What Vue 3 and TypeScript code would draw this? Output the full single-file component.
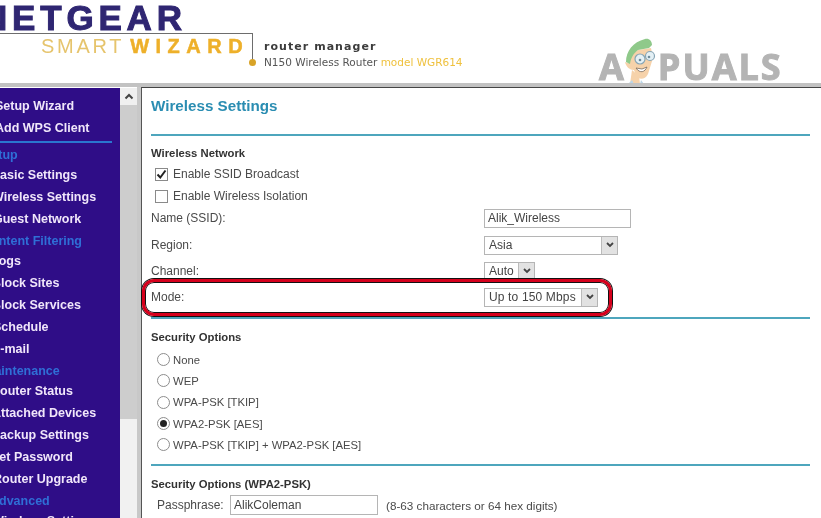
<script setup lang="ts">
interface NavItem { label: string; head?: boolean; x: number }
const nav: NavItem[] = [
  { label: 'Setup', head: true, x: -17 },
  { label: 'Basic Settings', x: -9 },
  { label: 'Wireless Settings', x: -8 },
  { label: 'Guest Network', x: -7 },
  { label: 'Content Filtering', head: true, x: -18 },
  { label: 'Logs', x: -9 },
  { label: 'Block Sites', x: -8 },
  { label: 'Block Services', x: -8 },
  { label: 'Schedule', x: -7 },
  { label: 'E-mail', x: -8 },
  { label: 'Maintenance', head: true, x: -16 },
  { label: 'Router Status', x: -9 },
  { label: 'Attached Devices', x: -8 },
  { label: 'Backup Settings', x: -9 },
  { label: 'Set Password', x: -9 },
  { label: 'Router Upgrade', x: -7 },
  { label: 'Advanced', head: true, x: -10 },
  { label: 'Wireless Settings', x: -8 },
]
const radios = [
  { label: 'None', on: false },
  { label: 'WEP', on: false },
  { label: 'WPA-PSK [TKIP]', on: false },
  { label: 'WPA2-PSK [AES]', on: true },
  { label: 'WPA-PSK [TKIP] + WPA2-PSK [AES]', on: false },
]
</script>

<template>
  <div class="page">
    <header class="head">
      <div class="brand">
        <div class="netgear">NETGEAR</div>
        <div class="bracket">
          <span class="smart">SMART</span><span class="wizard">WIZARD</span>
          <i class="dot"></i>
        </div>
      </div>
      <div class="product">
        <div class="rm">router manager</div>
        <div class="model">N150 Wireless Router <span class="gold">model WGR614</span></div>
      </div>
      <div class="appuals">
        <span class="al">A</span>
        <svg class="face" viewBox="0 0 44 52" width="44" height="52">
          <path d="M14 36 L12 50 L22 50 L21 42Z" fill="#f6d2aa" />
          <path d="M10 50 L14 46 L16 50Z M22 50 L23 46 L26 50Z" fill="#bcd6e8" />
          <path d="M10 29 C12 23 15 19 20 16 L33 14 L35 24 L30 40 C27 46 21 46 18 42 L16 36 C12 36 8 33 7 28 Z" fill="#f6d2aa" />
          <path d="M8 28 C8 17 15 8 27 5 C31 4 34 7 34 11 L31 14 L20 16 C15 20 13 24 12 30Z" fill="#8fc98a" />
          <circle cx="22" cy="25" r="5" fill="#e4f0f5" stroke="#87a5b5" stroke-width="1.2" />
          <circle cx="32" cy="22" r="4.5" fill="#e4f0f5" stroke="#87a5b5" stroke-width="1.2" />
          <circle cx="22" cy="26" r="1.3" fill="#6e8a99" />
          <circle cx="31" cy="23" r="1.3" fill="#6e8a99" />
          <path d="M18 34 C22 40 27 38 29 33 L24 35Z" fill="#fff" stroke="#7a6a5c" stroke-width=".8" />
        </svg>
        <span class="al rest">PUALS</span>
      </div>
    </header>

    <div class="body">
      <nav class="side">
        <div class="top-link a">Setup Wizard</div>
        <div class="top-link b">Add WPS Client</div>
        <div class="rule"></div>
        <div
          v-for="(n, i) in nav"
          :key="i"
          class="item"
          :class="{ sec: n.head }"
          :style="{ marginLeft: n.x + 'px' }"
        >{{ n.label }}</div>
      </nav>

      <div class="scroll">
        <div class="btn">
          <svg width="10" height="7" viewBox="0 0 10 7"><path d="M1.5 5.5 L5 2 L8.5 5.5" fill="none" stroke="#444" stroke-width="2" /></svg>
        </div>
        <div class="thumb"></div>
      </div>

      <main class="main">
        <h1>Wireless Settings</h1>
        <hr class="line first" />
        <h2 class="sec-w">Wireless Network</h2>
        <label class="chk"><span class="box"><svg width="11" height="11" viewBox="0 0 11 11"><path d="M1.5 5.5 L4.3 8.5 L9.5 1.5" fill="none" stroke="#222" stroke-width="2" /></svg></span>Enable SSID Broadcast</label>
        <label class="chk"><span class="box"></span>Enable Wireless Isolation</label>

        <div class="form">
          <div class="row r1"><span>Name (SSID):</span><div class="input wide">Alik_Wireless</div></div>
          <div class="row r2"><span>Region:</span>
            <div class="select s-region"><span class="val">Asia</span><span class="arrow"><svg width="8" height="6" viewBox="0 0 8 6"><path d="M1 1 L4 4 L7 1" fill="none" stroke="#444" stroke-width="1.8" /></svg></span></div>
          </div>
          <div class="row r3"><span>Channel:</span>
            <div class="select s-auto"><span class="val">Auto</span><span class="arrow"><svg width="8" height="6" viewBox="0 0 8 6"><path d="M1 1 L4 4 L7 1" fill="none" stroke="#444" stroke-width="1.8" /></svg></span></div>
          </div>
          <div class="row r4"><span>Mode:</span>
            <div class="select s-mode"><span class="val">Up to 150 Mbps</span><span class="arrow"><svg width="8" height="6" viewBox="0 0 8 6"><path d="M1 1 L4 4 L7 1" fill="none" stroke="#444" stroke-width="1.8" /></svg></span></div>
            <div class="mark"></div>
          </div>
        </div>

        <hr class="line second" />
        <h2 class="sec-h">Security Options</h2>
        <div class="radios">
          <label v-for="r in radios" :key="r.label" class="radio"><span class="ring" :class="{ on: r.on }"></span>{{ r.label }}</label>
        </div>
        <hr class="line third" />
        <h2 class="sec-p">Security Options (WPA2-PSK)</h2>
        <div class="pass">
          <span class="pl">Passphrase:</span>
          <div class="input pi">AlikColeman</div>
          <span class="hint">(8-63 characters or 64 hex digits)</span>
        </div>
      </main>
    </div>
  </div>
</template>

<style scoped>
.page {
  width: 821px;
  height: 518px;
  overflow: hidden;
  background: #fff;
  font-family: "Liberation Sans", Arial, sans-serif;
  color: #444;
  display: flex;
  flex-direction: column;
  filter: blur(0.35px);
}
.head {
  height: 83px;
  flex: none;
  position: relative;
  display: flex;
  background: #fff;
  overflow: hidden;
}
.brand { width: 253px; flex: none; }
.netgear {
  height: 33px;
  margin-left: -18px;
  font-weight: 700;
  font-size: 35px;
  line-height: 35px;
  letter-spacing: 4.8px;
  color: #2f2672;
  -webkit-text-stroke: 1px #2f2672;
  white-space: nowrap;
}
.bracket {
  position: relative;
  height: 30px;
  box-sizing: border-box;
  border-top: 1px solid #6d6d6d;
  border-right: 1px solid #6d6d6d;
  padding: 1px 0 0 41px;
  font-size: 20px;
  line-height: 23px;
  white-space: nowrap;
}
.smart { color: #e6c46c; letter-spacing: 2.7px; margin-right: 6px; }
.wizard { color: #eeb02a; font-weight: 700; letter-spacing: 6.5px; -webkit-text-stroke: .5px #eeb02a; }
.dot {
  position: absolute;
  right: -4px;
  bottom: -3px;
  width: 7px;
  height: 7px;
  border-radius: 50%;
  background: #d8a328;
}
.product { margin: 40px 0 0 11px; }
.rm {
  font-family: "DejaVu Sans", sans-serif;
  font-weight: 700;
  font-size: 11px;
  line-height: 14px;
  letter-spacing: 1.05px;
  color: #3c3c3c;
}
.model {
  font-family: "DejaVu Sans", sans-serif;
  font-size: 10.5px;
  line-height: 16px;
  color: #555;
  white-space: nowrap;
}
.gold { color: #efc13e; }
.appuals {
  position: absolute;
  left: 599px;
  top: 34px;
  display: flex;
  height: 52px;
  font-family: "Open Sans", sans-serif;
  font-weight: 700;
  font-size: 36px;
  line-height: 52px;
  letter-spacing: 2px;
  color: #b4b4b4;
}
.al {
  -webkit-text-stroke: 1px #b4b4b4;
  margin-top: 7px;
  white-space: nowrap;
}
.rest { padding-right: 4px; }
.face { flex: none; margin: 0 -4px 0 -8px; }
.body {
  flex: 1;
  display: flex;
  min-height: 0;
  border-top: 4px solid #c2c2c2;
}
.side {
  width: 120px;
  flex: none;
  margin-top: 1px;
  background: #2f0d87;
  color: #f0e6fa;
  font-weight: 700;
  font-size: 12.5px;
  white-space: nowrap;
  overflow: hidden;
  padding-top: 7px;
}
.top-link { height: 22px; line-height: 22px; }
.a { margin-left: -5px; }
.b { margin-left: -5px; }
.rule { height: 2px; width: 112px; margin: 2px 0 1px; background: #2a76cf; }
.item { height: 22px; line-height: 22px; }
.item.sec { color: #2f6fd6; height: 20px; }
.scroll {
  width: 17px;
  flex: none;
  margin-top: 1px;
  background: #f1f1f1;
  display: flex;
  flex-direction: column;
}
.btn {
  height: 17px;
  background: #f0f0f0;
  display: flex;
  align-items: center;
  justify-content: center;
}
.thumb { height: 314px; background: #cdcdcd; }
.main {
  flex: 1;
  min-width: 0;
  margin-left: 4px;
  box-sizing: border-box;
  border-left: 1px solid #555;
  border-top: 1px solid #444;
  padding: 0 11px 0 9px;
  box-shadow: -4px 0 0 #c8c8c8;
  font-size: 12px;
  color: #4a4a4a;
}
h1 {
  margin: 9px 0 0;
  font-size: 15.2px;
  line-height: 18px;
  color: #2a8db2;
  font-weight: 700;
}
h2 {
  margin: 0;
  font-size: 11.3px;
  font-weight: 700;
  line-height: 14px;
  color: #333;
}
.line { border: 0; height: 2px; margin: 0; background: #4ea6bd; }
.first { margin: 19px 0 10px; }
.sec-w { margin-bottom: 3px; }
.second { margin-top: 7px; }
.third { margin-top: 9px; }
.sec-h { margin-top: 11px; }
.sec-p { margin-top: 11px; }
.chk {
  display: flex;
  align-items: center;
  height: 22px;
  padding-left: 4px;
  white-space: nowrap;
}
.box {
  width: 11px;
  height: 11px;
  border: 1px solid #8a8a8a;
  margin-right: 5px;
  display: flex;
  align-items: center;
  justify-content: center;
}
.row { display: grid; grid-template-columns: 333px auto; align-items: center; position: relative; }
.r1 { height: 22px; }
.r2 { height: 26px; margin-top: 3px; }
.r3 { height: 26px; }
.r4 { height: 26px; }
.input {
  box-sizing: border-box;
  border: 1px solid #b5b5b5;
  background: #fff;
  color: #444;
  padding-left: 3px;
  font-size: 12px;
}
.wide { width: 147px; height: 19px; line-height: 17px; }
.select {
  box-sizing: border-box;
  border: 1px solid #b5b5b5;
  background: #fff;
  display: flex;
  align-items: stretch;
  justify-content: space-between;
  height: 19px;
  line-height: 17px;
  padding-left: 4px;
}
.s-region { width: 134px; }
.s-auto { width: 51px; }
.s-mode { width: 114px; letter-spacing: .15px; }
.val { color: #444; white-space: nowrap; }
.arrow {
  width: 15px;
  background: #e2e2e2;
  border-left: 1px solid #bbb;
  display: flex;
  align-items: center;
  justify-content: center;
}
.mark {
  position: absolute;
  left: -9px;
  right: 198px;
  top: -5px;
  height: 37px;
  box-sizing: border-box;
  border: 3px solid #d6001c;
  border-radius: 12px;
  box-shadow: 0 0 0 1px #111, inset 0 0 0 1px #111;
  pointer-events: none;
}
.radios { padding: 5px 0 0 6px; }
.radio {
  display: flex;
  align-items: center;
  height: 21.3px;
  font-size: 11.3px;
  white-space: nowrap;
}
.ring {
  width: 11px;
  height: 11px;
  border: 1px solid #8d8d8d;
  border-radius: 50%;
  margin-right: 3px;
  position: relative;
  flex: none;
}
.ring.on::after {
  content: "";
  position: absolute;
  left: 2px;
  top: 2px;
  width: 7px;
  height: 7px;
  border-radius: 50%;
  background: #222;
}
.pass {
  display: flex;
  align-items: center;
  margin-top: 4px;
  padding-left: 6px;
  font-size: 12px;
}
.pl { width: 73px; }
.pi { width: 148px; height: 20px; line-height: 18px; }
.hint { margin-left: 8px; font-size: 11.7px; white-space: nowrap; }
</style>

<style>
html, body { margin: 0; overflow: hidden; }
</style>
